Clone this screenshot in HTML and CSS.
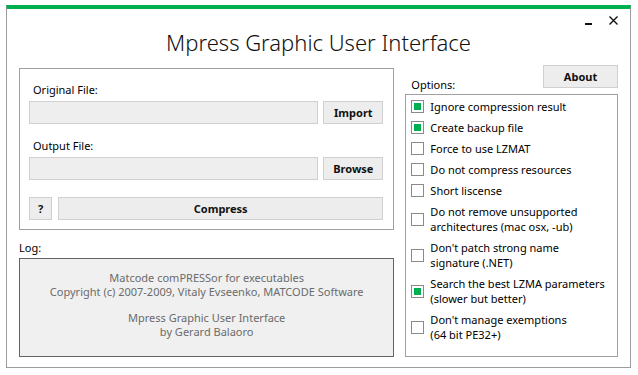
FILE: index.html
```html
<!DOCTYPE html>
<html lang="en">
<head>
    <meta charset="UTF-8">
    <title>Mpress Graphic User Interface</title>
    <link rel="stylesheet" href="styles.css">
</head>
<body>
    <div class="window">
        <!-- Window controls -->
        <div class="topbar">
            <span class="ctl ctl-min"></span>
            <svg class="ctl ctl-close" width="9" height="9" viewBox="0 0 9 9">
                <path d="M0.5 0.5 L8.5 8.5 M8.5 0.5 L0.5 8.5" stroke="#111" stroke-width="1.4" fill="none"/>
            </svg>
        </div>

        <h1 class="title">Mpress Graphic User Interface</h1>

        <div class="main">
            <div class="left">
                <div class="panel">
                    <div class="field-label">Original File:</div>
                    <div class="row">
                        <div class="input"></div>
                        <button class="btn">Import</button>
                    </div>

                    <div class="field-label second">Output File:</div>
                    <div class="row">
                        <div class="input"></div>
                        <button class="btn">Browse</button>
                    </div>

                    <div class="row actions">
                        <button class="btn btn-help">?</button>
                        <button class="btn btn-wide">Compress</button>
                    </div>
                </div>

                <div class="log-label">Log:</div>
                <div class="log">
                    <p>Matcode comPRESSor for executables<br>Copyright (c) 2007-2009, Vitaly Evseenko, MATCODE Software</p>
                    <p>Mpress Graphic User Interface<br>by Gerard Balaoro</p>
                </div>
            </div>

            <div class="right">
                <div class="options-head">
                    <span class="options-label">Options:</span>
                    <button class="btn btn-about">About</button>
                </div>
                <ul class="options">
                    <li class="checked"><span class="box"></span><span>Ignore compression result</span></li>
                    <li class="checked"><span class="box"></span><span>Create backup file</span></li>
                    <li><span class="box"></span><span>Force to use LZMAT</span></li>
                    <li><span class="box"></span><span>Do not compress resources</span></li>
                    <li><span class="box"></span><span>Short liscense</span></li>
                    <li><span class="box"></span><span>Do not remove unsupported<br>architectures (mac osx, -ub)</span></li>
                    <li><span class="box"></span><span>Don't patch strong name<br>signature (.NET)</span></li>
                    <li class="checked"><span class="box"></span><span>Search the best LZMA parameters<br>(slower but better)</span></li>
                    <li><span class="box"></span><span>Don't manage exemptions<br>(64 bit PE32+)</span></li>
                </ul>
            </div>
        </div>
    </div>
</body>
</html>
```

FILE: styles.css
```css
body {
    margin: 0;
    background-color: #fff;
    font-family: "Noto Sans", "Open Sans", sans-serif;
    font-size: 11px;
    color: #000;
}
.window {
    box-sizing: border-box;
    width: 625px;
    height: 363px;
    margin: 5px 0 0 6px;
    border: 1px solid #9c9c9c;
    border-top: 4px solid #00b050;
    padding: 0 12px 10px 12px;
}
.topbar {
    display: flex;
    justify-content: flex-end;
    align-items: flex-start;
    height: 20px;
    padding-top: 7px;
    box-sizing: border-box;
}
.ctl-min {
    width: 7px;
    height: 2px;
    margin-top: 7px;
    margin-right: 17px;
    background-color: #111;
}
.title {
    margin: 0;
    height: 36px;
    font-size: 22px;
    font-weight: 300;
    line-height: 27px;
    text-align: center;
    color: #111;
}
.main {
    display: flex;
    gap: 11px;
    height: 292px;
}
.left {
    width: 376px;
    padding-top: 3px;
    display: flex;
    flex-direction: column;
}
.panel {
    box-sizing: border-box;
    height: 162px;
    border: 1px solid #a0a0a0;
    padding: 13px 10px 9px 9px;
}
.field-label {
    height: 16px;
    line-height: 16px;
    margin: 0 0 3px 4px;
}
.field-label.second {
    margin-top: 14px;
}
.row {
    display: flex;
    gap: 5px;
}
.actions {
    margin-top: 17px;
    gap: 6px;
}
.input {
    flex: 1;
    height: 23px;
    box-sizing: border-box;
    background-color: #eeeeee;
    border: 1px solid #d0d0d0;
}
.btn {
    box-sizing: border-box;
    width: 60px;
    height: 23px;
    padding: 0;
    background-color: #ededed;
    border: 1px solid #d0d0d0;
    font-family: inherit;
    font-size: 11px;
    font-weight: bold;
    color: #111;
}
.btn-help {
    width: 23px;
}
.btn-wide {
    flex: 1;
}
.log-label {
    height: 16px;
    line-height: 16px;
    margin: 10px 0 2px 0;
}
.log {
    box-sizing: border-box;
    height: 99px;
    background-color: #f0f0f0;
    border: 1px solid #646464;
    padding-top: 12px;
    text-align: center;
    color: #6b6b6b;
    line-height: 14px;
}
.log p {
    margin: 0 0 12px 0;
}
.right {
    width: 213px;
    display: flex;
    flex-direction: column;
}
.options-head {
    height: 29px;
    display: flex;
    justify-content: space-between;
    align-items: flex-start;
}
.options-label {
    margin: 12px 0 0 6px;
    line-height: 16px;
}
.btn-about {
    width: 75px;
}
.options {
    flex: 1;
    margin: 0;
    padding: 1px 0 0 5px;
    list-style: none;
    border: 1px solid #a0a0a0;
}
.options li {
    display: flex;
    align-items: center;
    gap: 6px;
    padding: 3px 0;
    line-height: 15px;
}
.box {
    box-sizing: border-box;
    flex: none;
    width: 13px;
    height: 13px;
    border: 1px solid #8a8a8a;
    background-color: #fff;
}
.checked .box {
    background-color: #00b050;
    box-shadow: inset 0 0 0 2px #fff;
}
```
